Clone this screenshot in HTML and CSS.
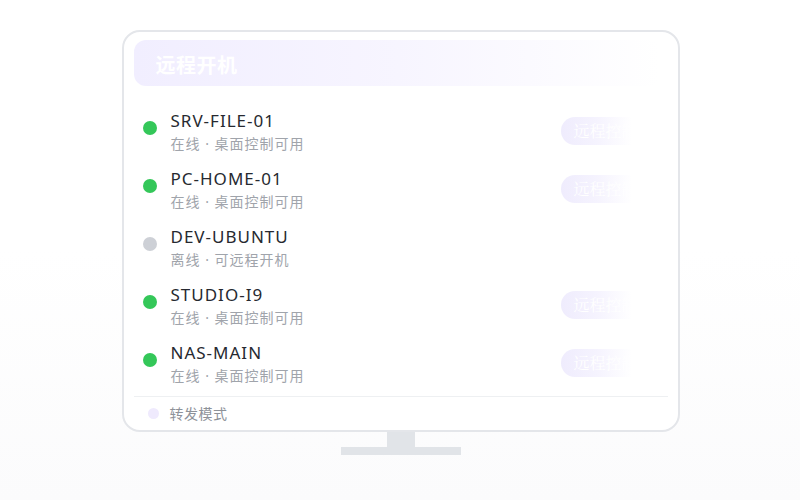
FILE: index.html
```html
<!DOCTYPE html>
<html lang="zh-CN">
<head>
    <meta charset="UTF-8">
    <meta name="viewport" content="width=device-width, initial-scale=1.0">
    <title>远程开机</title>
    <link rel="stylesheet" href="styles.css">
</head>
<body>
    <div class="stage">
        <div class="monitor">
            <div class="screen">
                <div class="title-bar">远程开机</div>

                <!-- Device list -->
                <div class="devices">
                    <div class="device">
                        <span class="dot online"></span>
                        <div class="info">
                            <div class="name">SRV-FILE-01</div>
                            <div class="status">在线 · 桌面控制可用</div>
                        </div>
                        <span class="control">远程控制</span>
                    </div>
                    <div class="device">
                        <span class="dot online"></span>
                        <div class="info">
                            <div class="name">PC-HOME-01</div>
                            <div class="status">在线 · 桌面控制可用</div>
                        </div>
                        <span class="control">远程控制</span>
                    </div>
                    <div class="device">
                        <span class="dot offline"></span>
                        <div class="info">
                            <div class="name">DEV-UBUNTU</div>
                            <div class="status">离线 · 可远程开机</div>
                        </div>
                    </div>
                    <div class="device">
                        <span class="dot online"></span>
                        <div class="info">
                            <div class="name">STUDIO-I9</div>
                            <div class="status">在线 · 桌面控制可用</div>
                        </div>
                        <span class="control">远程控制</span>
                    </div>
                    <div class="device">
                        <span class="dot online"></span>
                        <div class="info">
                            <div class="name">NAS-MAIN</div>
                            <div class="status">在线 · 桌面控制可用</div>
                        </div>
                        <span class="control">远程控制</span>
                    </div>
                </div>

                <div class="footer">
                    <span class="dot relay"></span>
                    <span>转发模式</span>
                </div>
            </div>
            <div class="neck"></div>
            <div class="base"></div>
        </div>
    </div>
</body>
</html>
```

FILE: styles.css
```css
body {
    margin: 0;
    height: 500px;
    overflow: hidden;
    font-family: "Noto Sans", "Noto Sans CJK SC", sans-serif;
    background: linear-gradient(to bottom, #ffffff 0%, #ffffff 50%, #fbfbfc 100%);
}
.stage {
    padding-top: 30px;
    display: flex;
    justify-content: center;
}
.monitor {
    width: 558px;
    display: flex;
    flex-direction: column;
    align-items: center;
    margin-left: 1px;
}
.screen {
    box-sizing: border-box;
    width: 558px;
    height: 402px;
    border: 2px solid #e4e6ea;
    border-radius: 18px;
    background: #fff;
    padding: 8px 10px 0 10px;
}
.title-bar {
    height: 46px;
    border-radius: 12px;
    background: linear-gradient(to right, #f1eeff 0%, #f7f5ff 50%, #ffffff 100%);
    color: #fff;
    font-size: 20px;
    font-weight: 700;
    letter-spacing: 0.5px;
    line-height: 52px;
    padding-left: 22px;
    margin-right: 8px;
}
.devices {
    padding-top: 23px;
}
.device {
    display: flex;
    align-items: flex-start;
    height: 58px;
    padding-left: 9px;
}
.dot {
    width: 14px;
    height: 14px;
    border-radius: 50%;
    flex: none;
}
.device .dot {
    margin-top: 12px;
    margin-right: 14px;
}
.online {
    background: #34c759;
}
.offline {
    background: #cdd0d6;
}
.relay {
    background: #efeafd;
    width: 11px;
    height: 11px;
    margin-right: 11px;
}
.info {
    flex: 1;
}
.name {
    font-size: 17px;
    color: #262930;
    line-height: 24px;
    letter-spacing: 1px;
}
.status {
    font-size: 14px;
    color: #a0a4ab;
    line-height: 22px;
    letter-spacing: 1px;
}
.control {
    margin-top: 8px;
    margin-right: 18px;
    height: 28px;
    border-radius: 14px;
    background: linear-gradient(to right, #efecfd 0%, #f5f3fe 40%, #ffffff 80%);
    color: #fff;
    font-family: "Noto Serif CJK SC", "Noto Sans CJK SC", serif;
    font-size: 16px;
    line-height: 28px;
    padding: 0 12px;
    white-space: nowrap;
}
.footer {
    margin-top: -3px;
    border-top: 1px solid #eef0f2;
    height: 32px;
    display: flex;
    align-items: center;
    padding-left: 14px;
    font-size: 14px;
    letter-spacing: 0.5px;
    color: #8e9299;
}
.neck {
    width: 28px;
    height: 15px;
    background: #e1e4e8;
}
.base {
    width: 120px;
    height: 8px;
    background: #e1e4e8;
}
```
